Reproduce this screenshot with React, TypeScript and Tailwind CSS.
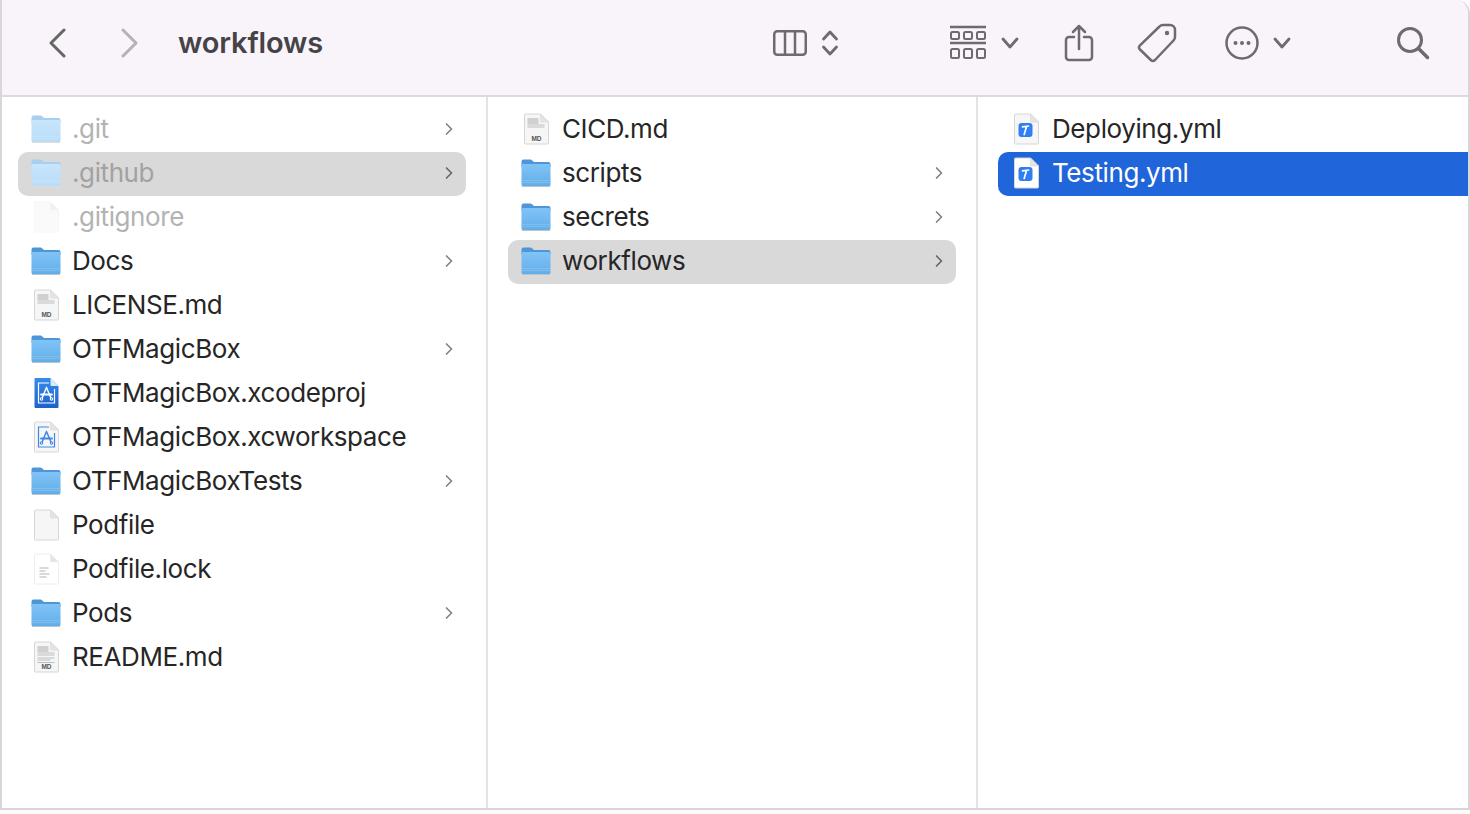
import { ChevronRight } from "lucide-react";

type Kind = "folder" | "blank" | "md" | "mdText" | "lines" | "xcodeproj" | "xcworkspace" | "yml";

type Item = {
  name: string;
  kind: Kind;
  arrow?: boolean;
  dim?: boolean;
  state?: "gray" | "blue";
};

const col1: Item[] = [
  { name: ".git", kind: "folder", arrow: true, dim: true },
  { name: ".github", kind: "folder", arrow: true, dim: true, state: "gray" },
  { name: ".gitignore", kind: "blank", dim: true },
  { name: "Docs", kind: "folder", arrow: true },
  { name: "LICENSE.md", kind: "md" },
  { name: "OTFMagicBox", kind: "folder", arrow: true },
  { name: "OTFMagicBox.xcodeproj", kind: "xcodeproj" },
  { name: "OTFMagicBox.xcworkspace", kind: "xcworkspace" },
  { name: "OTFMagicBoxTests", kind: "folder", arrow: true },
  { name: "Podfile", kind: "blank" },
  { name: "Podfile.lock", kind: "lines" },
  { name: "Pods", kind: "folder", arrow: true },
  { name: "README.md", kind: "mdText" },
];

const col2: Item[] = [
  { name: "CICD.md", kind: "md" },
  { name: "scripts", kind: "folder", arrow: true },
  { name: "secrets", kind: "folder", arrow: true },
  { name: "workflows", kind: "folder", arrow: true, state: "gray" },
];

const col3: Item[] = [
  { name: "Deploying.yml", kind: "yml" },
  { name: "Testing.yml", kind: "yml", state: "blue" },
];

const sheet = "M4.500 1h15L27.500 9v21a1 1 0 0 1-1 1H4.500a1 1 0 0 1-1-1V2a1 1 0 0 1 1-1z";
const fold = "M19.500 1v7a1 1 0 0 0 1 1h7z";

const Paper = ({ fill = "#f6f6f6", line = "#d6d6d6" }: { fill?: string; line?: string }) => (
  <>
    <path d={sheet} fill={fill} stroke={line} strokeWidth="1" />
    <path d={fold} fill="#e4e4e4" stroke={line} strokeWidth="0.6" />
  </>
);

const AppGlyph = ({ color }: { color: string }) => (
  <g stroke={color} fill="none" strokeLinecap="round">
    <path d="M15.500 10.500l-4.200 10M15.500 10.500l4.200 10" strokeWidth="1.500" />
    <path d="M10 17.500h11" strokeWidth="1.800" />
    <circle cx="10.500" cy="22" r="1.200" strokeWidth="1.100" />
    <circle cx="20.500" cy="22" r="1.200" strokeWidth="1.100" />
  </g>
);

const FileIcon = ({ kind, dim, selected }: { kind: Kind; dim?: boolean; selected?: boolean }) => {
  if (kind === "folder") {
    const bodyId = dim ? "folderBodyDim" : "folderBody";
    return (
      <svg width="30" height="28" viewBox="0 0 30 28" className="mb-[2px] shrink-0">
        <defs>
          <linearGradient id="folderBody" x1="0" y1="0" x2="0" y2="1">
            <stop offset="0" stopColor="#80c4f7" />
            <stop offset="1" stopColor="#62ade8" />
          </linearGradient>
          <linearGradient id="folderBodyDim" x1="0" y1="0" x2="0" y2="1">
            <stop offset="0" stopColor="#c8e6fc" />
            <stop offset="1" stopColor="#b8dcf8" />
          </linearGradient>
        </defs>
        <path d="M0.500 6V2.500a2 2 0 0 1 2-2h7a2 2 0 0 1 1.500.700L13 3h14.500a2 2 0 0 1 2 2v3H0.500z" fill={dim ? "#a6cff0" : "#4f96d8"} />
        <rect x="0.500" y="5" width="29" height="22" rx="1.500" fill={`url(#${bodyId})`} />
        <path d="M0.500 21.500h29M0.500 23.500h29" stroke={dim ? "#cfe6f8" : "#8fc6ef"} strokeWidth="0.600" />
        <path d="M1 27.500h28" stroke={dim ? "#dddddd" : "#b8c4ce"} strokeWidth="1" />
      </svg>
    );
  }
  if (kind === "xcodeproj") {
    return (
      <svg width="30" height="32" viewBox="0 0 30 32" className="mb-[3px] shrink-0">
        <defs>
          <linearGradient id="projBody" x1="0" y1="0" x2="0" y2="1">
            <stop offset="0" stopColor="#348cec" />
            <stop offset="1" stopColor="#1d62cc" />
          </linearGradient>
        </defs>
        <path d={sheet} fill="url(#projBody)" />
        <path d={fold} fill="#dbe9fa" />
        <path d="M18 6H7.500v20h16V12" stroke="#fff" strokeWidth="1.200" fill="none" />
        <AppGlyph color="#fff" />
      </svg>
    );
  }
  return (
    <svg width="30" height="32" viewBox="0 0 30 32" className="mb-[3px] shrink-0">
      {kind === "lines" ? (
        <>
          <Paper fill="#ffffff" line="#eeeeee" />
          <path d="M8.500 15h9M8.500 18h6M8.500 21h10M8.500 24h7" stroke="#b4b4b4" strokeWidth="1.100" />
        </>
      ) : (
        <Paper fill={selected ? "#ffffff" : "#f6f6f6"} line={dim ? "#eeeeee" : "#d6d6d6"} />
      )}
      {(kind === "md" || kind === "mdText") && (
        <>
          <rect x="6.500" y="5" width="11" height="6" fill="#d0d0d0" />
          <rect x="6.500" y="11" width="17" height="4" fill="#dadada" />
          {kind === "mdText" && <path d="M6.500 17h17M6.500 19h13M6.500 21.500h17" stroke="#bcbcbc" strokeWidth="1" />}
          <text x="15.500" y="28" textAnchor="middle" fontSize="6.500" fontWeight="700" fill="#555" fontFamily="'Liberation Sans', sans-serif">
            MD
          </text>
        </>
      )}
      {kind === "xcworkspace" && (
        <>
          <path d="M18 6H7.500v20h16V12" stroke="#3f86e6" strokeWidth="1.200" fill="none" />
          <AppGlyph color="#3f86e6" />
        </>
      )}
      {kind === "yml" && (
        <>
          <rect x="7.500" y="10" width="14" height="14" rx="3" fill="#2f7ff2" />
          <path d="M15.500 13.500l-2.300 8M11.500 13.800l6-.8" stroke="#fff" strokeWidth="1.700" fill="none" strokeLinecap="round" />
        </>
      )}
    </svg>
  );
};

const Row = ({ item }: { item: Item }) => {
  const bg = item.state === "gray" ? "bg-[#d9d9d9]" : item.state === "blue" ? "bg-[#2065d9] rounded-r-none" : "";
  const txt =
    item.state === "blue"
      ? "text-white"
      : item.state === "gray" && item.dim
        ? "text-[#a2a2a2]"
        : item.dim
          ? "text-[#b3b3b3]"
          : "text-[#262626]";
  const chev = item.state === "gray" ? "text-[#666666]" : "text-[#808080]";
  return (
    <div className={`flex h-[44px] items-center rounded-[10px] pl-[13px] ${bg}`}>
      <span className={`flex w-[41px] shrink-0 ${item.dim && item.kind !== "folder" ? "opacity-50" : ""}`}>
        <FileIcon kind={item.kind} dim={item.dim} selected={item.state === "blue"} />
      </span>
      <span className={`mb-[4px] flex-1 text-[26px] tracking-[-0.4px] ${txt}`}>{item.name}</span>
      {item.arrow && <ChevronRight size={20} strokeWidth={2} className={`mr-[7px] mb-[2px] ${chev}`} />}
    </div>
  );
};

const Column = ({ items, className }: { items: Item[]; className: string }) => (
  <div className={`flex flex-col pt-[11px] ${className}`}>
    {items.map((item) => (
      <Row key={item.name} item={item} />
    ))}
  </div>
);

const Toolbar = () => (
  <div className="flex h-[97px] shrink-0 items-center rounded-tr-[14px] border-b-2 border-[#dcdadc] bg-[#f8f4fa] pb-[9px] text-[#6e6a6f]">
    <svg width="18" height="30" viewBox="0 0 18 30" className="ml-[46px]" fill="none" stroke="#666" strokeWidth="3" strokeLinecap="round" strokeLinejoin="round">
      <path d="M16 2L3 15l13 13" />
    </svg>
    <svg width="18" height="30" viewBox="0 0 18 30" className="ml-[55px]" fill="none" stroke="#b4b2b5" strokeWidth="3" strokeLinecap="round" strokeLinejoin="round">
      <path d="M2 2l13 13L2 28" />
    </svg>
    <h1 className="ml-[39px] w-[595px] text-[29px] font-semibold tracking-[-0.15px] text-[#454347]">workflows</h1>
    <svg width="34" height="26" viewBox="0 0 34 26" fill="none" stroke="currentColor" strokeWidth="2.500">
      <rect x="1.250" y="1.250" width="31.500" height="23.500" rx="3" />
      <path d="M12 1.500v23M22 1.500v23" />
    </svg>
    <svg width="18" height="28" viewBox="0 0 18 28" className="ml-[14px]" fill="none" stroke="currentColor" strokeWidth="2.800" strokeLinecap="round" strokeLinejoin="round">
      <path d="M2.500 10L9 3l6.500 7M2.500 18L9 25l6.500-7" />
    </svg>
    <svg width="38" height="36" viewBox="0 0 38 36" className="ml-[110px]" fill="none" stroke="currentColor" strokeWidth="2.500">
      <path d="M1 2h36M1 18h36" />
      <rect x="2" y="7" width="8" height="7" rx="1.500" strokeWidth="2" />
      <rect x="15" y="7" width="8" height="7" rx="1.500" strokeWidth="2" />
      <rect x="28" y="7" width="8" height="7" rx="1.500" strokeWidth="2" />
      <rect x="2" y="24" width="8" height="9" rx="1.500" strokeWidth="2" />
      <rect x="15" y="24" width="8" height="9" rx="1.500" strokeWidth="2" />
      <rect x="28" y="24" width="8" height="9" rx="1.500" strokeWidth="2" />
    </svg>
    <svg width="18" height="12" viewBox="0 0 18 12" className="ml-[14px]" fill="none" stroke="currentColor" strokeWidth="2.800" strokeLinecap="round" strokeLinejoin="round">
      <path d="M2 2l7 8 7-8" />
    </svg>
    <svg width="32" height="38" viewBox="0 0 32 38" className="ml-[45px]" fill="none" stroke="currentColor" strokeWidth="2.500" strokeLinecap="round" strokeLinejoin="round">
      <path d="M10 13H5a3 3 0 0 0-3 3v17a3 3 0 0 0 3 3h20a3 3 0 0 0 3-3V16a3 3 0 0 0-3-3h-5" />
      <path d="M15 25V2M9 8l6-6 6 6" />
    </svg>
    <svg width="40" height="40" viewBox="0 0 40 40" className="ml-[41px]" fill="none" stroke="currentColor" strokeWidth="2.500" strokeLinejoin="round">
      <path d="M26 2h7a5 5 0 0 1 5 5v7a5 5 0 0 1-1.500 3.500L18 37a3 3 0 0 1-4.200 0L3 26.500a3 3 0 0 1 0-4.200L22.500 3.500A5 5 0 0 1 26 2z" />
      <circle cx="30" cy="10" r="2.200" fill="currentColor" stroke="none" />
    </svg>
    <svg width="34" height="34" viewBox="0 0 34 34" className="ml-[48px]" fill="none" stroke="currentColor" strokeWidth="2.500">
      <circle cx="17" cy="17" r="15.500" />
      <circle cx="10.500" cy="17" r="2" fill="currentColor" stroke="none" />
      <circle cx="17" cy="17" r="2" fill="currentColor" stroke="none" />
      <circle cx="23.500" cy="17" r="2" fill="currentColor" stroke="none" />
    </svg>
    <svg width="18" height="12" viewBox="0 0 18 12" className="ml-[14px]" fill="none" stroke="currentColor" strokeWidth="2.800" strokeLinecap="round" strokeLinejoin="round">
      <path d="M2 2l7 8 7-8" />
    </svg>
    <svg width="34" height="34" viewBox="0 0 34 34" className="ml-[105px]" fill="none" stroke="currentColor" strokeWidth="3" strokeLinecap="round">
      <circle cx="14" cy="14" r="11.500" />
      <path d="M22.500 22.500l9 9" strokeWidth="3.500" />
    </svg>
  </div>
);

export default function App() {
  return (
    <div className="h-[814px] w-[1470px] overflow-hidden bg-[#fbfbfb] font-['Inter',sans-serif]">
      <div className="flex h-[810px] w-[1470px] flex-col rounded-tr-[14px] border-r-2 border-b-2 border-l-2 border-[#d8d6d8] bg-white">
        <Toolbar />
        <div className="flex min-h-0 flex-1">
          <Column items={col1} className="w-[486px] shrink-0 border-r-2 border-[#e3e3e3] pr-[20px] pl-[16px]" />
          <Column items={col2} className="w-[490px] shrink-0 border-r-2 border-[#e3e3e3] px-[20px]" />
          <Column items={col3} className="flex-1 pl-[20px]" />
        </div>
      </div>
    </div>
  );
}
